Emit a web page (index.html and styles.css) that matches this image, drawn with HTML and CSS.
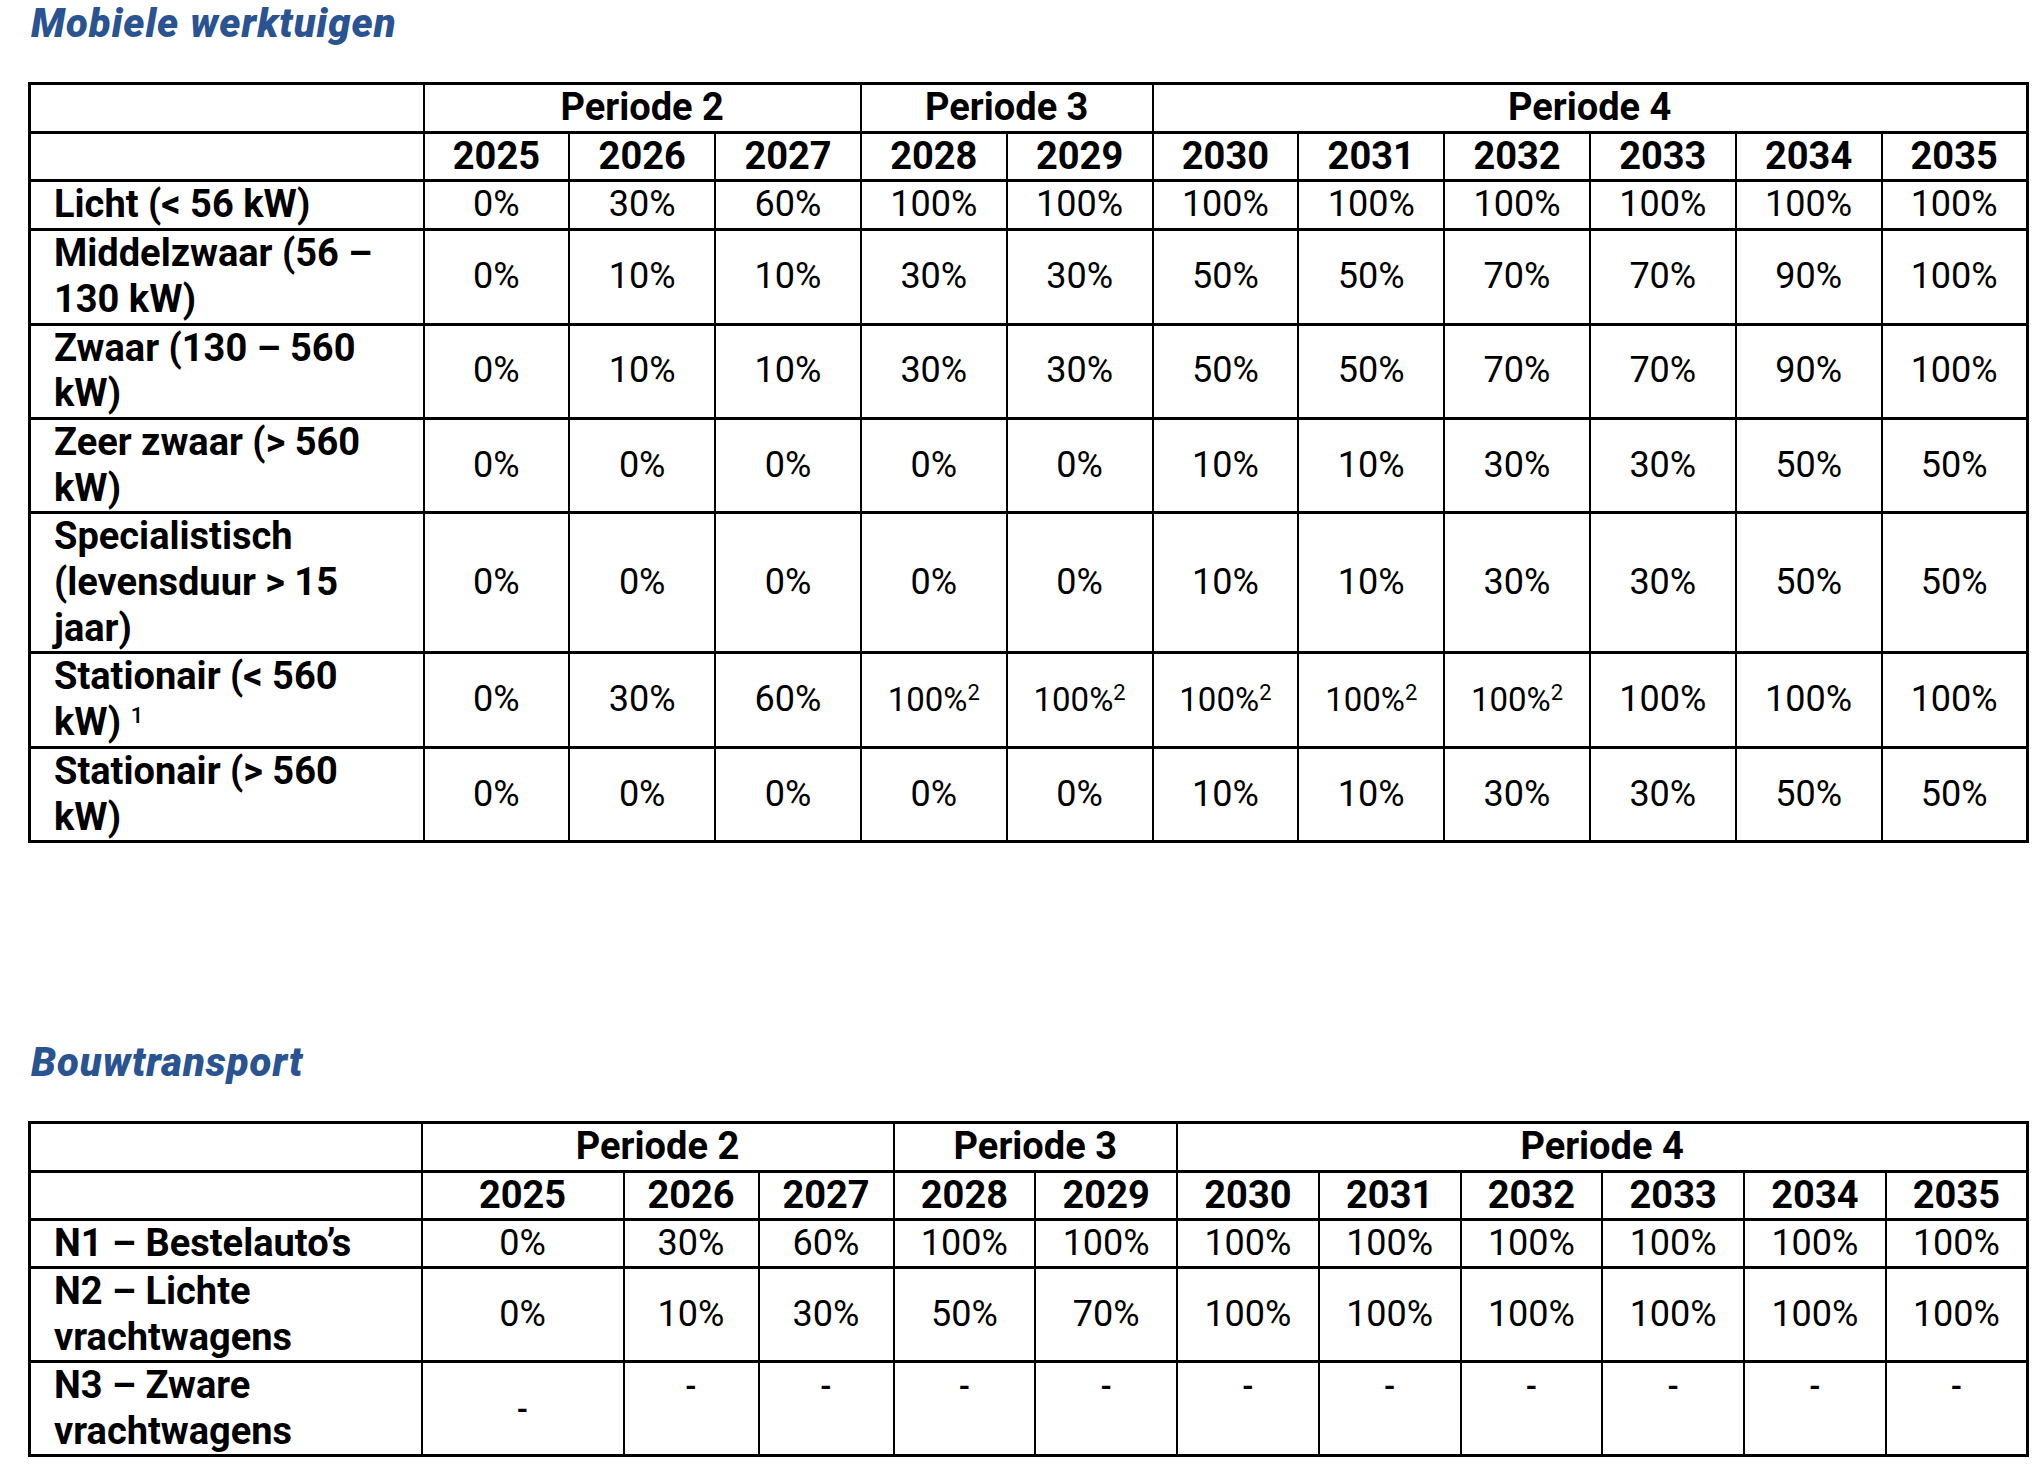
FILE: index.html
```html
<!DOCTYPE html>
<html lang="nl">
<head>
<meta charset="utf-8">
<title>Mobiele werktuigen en bouwtransport</title>
<link rel="stylesheet" href="styles.css">
</head>
<body>
<section class="block">
  <h2 class="title">Mobiele werktuigen</h2>
  <table class="grid grid-a">
    <colgroup>
      <col class="c-label-a">
      <col span="11" class="c-year-a">
    </colgroup>
    <thead>
      <tr>
        <th></th>
        <th colspan="3">Periode 2</th>
        <th colspan="2">Periode 3</th>
        <th colspan="6">Periode 4</th>
      </tr>
      <tr>
        <th></th>
        <th>2025</th><th>2026</th><th>2027</th><th>2028</th><th>2029</th><th>2030</th><th>2031</th><th>2032</th><th>2033</th><th>2034</th><th>2035</th>
      </tr>
    </thead>
    <tbody>
      <tr>
        <th class="label">Licht (&lt; 56 kW)</th>
        <td>0%</td><td>30%</td><td>60%</td><td>100%</td><td>100%</td><td>100%</td><td>100%</td><td>100%</td><td>100%</td><td>100%</td><td>100%</td>
      </tr>
      <tr>
        <th class="label">Middelzwaar (56 –<br>130 kW)</th>
        <td>0%</td><td>10%</td><td>10%</td><td>30%</td><td>30%</td><td>50%</td><td>50%</td><td>70%</td><td>70%</td><td>90%</td><td>100%</td>
      </tr>
      <tr>
        <th class="label">Zwaar (130 – 560<br>kW)</th>
        <td>0%</td><td>10%</td><td>10%</td><td>30%</td><td>30%</td><td>50%</td><td>50%</td><td>70%</td><td>70%</td><td>90%</td><td>100%</td>
      </tr>
      <tr>
        <th class="label">Zeer zwaar (&gt; 560<br>kW)</th>
        <td>0%</td><td>0%</td><td>0%</td><td>0%</td><td>0%</td><td>10%</td><td>10%</td><td>30%</td><td>30%</td><td>50%</td><td>50%</td>
      </tr>
      <tr>
        <th class="label">Specialistisch<br>(levensduur &gt; 15<br>jaar)</th>
        <td>0%</td><td>0%</td><td>0%</td><td>0%</td><td>0%</td><td>10%</td><td>10%</td><td>30%</td><td>30%</td><td>50%</td><td>50%</td>
      </tr>
      <tr>
        <th class="label">Stationair (&lt; 560<br>kW) <sup class="fn">1</sup></th>
        <td>0%</td><td>30%</td><td>60%</td>
        <td class="small">100%<sup>2</sup></td><td class="small">100%<sup>2</sup></td><td class="small">100%<sup>2</sup></td><td class="small">100%<sup>2</sup></td><td class="small">100%<sup>2</sup></td>
        <td>100%</td><td>100%</td><td>100%</td>
      </tr>
      <tr>
        <th class="label">Stationair (&gt; 560<br>kW)</th>
        <td>0%</td><td>0%</td><td>0%</td><td>0%</td><td>0%</td><td>10%</td><td>10%</td><td>30%</td><td>30%</td><td>50%</td><td>50%</td>
      </tr>
    </tbody>
  </table>
</section>

<section class="block block-second">
  <h2 class="title">Bouwtransport</h2>
  <table class="grid grid-b">
    <colgroup>
      <col class="c-label-b">
      <col class="c-b1">
      <col class="c-b2">
      <col class="c-b3">
      <col span="8" class="c-b4">
    </colgroup>
    <thead>
      <tr>
        <th></th>
        <th colspan="3">Periode 2</th>
        <th colspan="2">Periode 3</th>
        <th colspan="6">Periode 4</th>
      </tr>
      <tr>
        <th></th>
        <th>2025</th><th>2026</th><th>2027</th><th>2028</th><th>2029</th><th>2030</th><th>2031</th><th>2032</th><th>2033</th><th>2034</th><th>2035</th>
      </tr>
    </thead>
    <tbody>
      <tr>
        <th class="label">N1 – Bestelauto’s</th>
        <td>0%</td><td>30%</td><td>60%</td><td>100%</td><td>100%</td><td>100%</td><td>100%</td><td>100%</td><td>100%</td><td>100%</td><td>100%</td>
      </tr>
      <tr>
        <th class="label">N2 – Lichte<br>vrachtwagens</th>
        <td>0%</td><td>10%</td><td>30%</td><td>50%</td><td>70%</td><td>100%</td><td>100%</td><td>100%</td><td>100%</td><td>100%</td><td>100%</td>
      </tr>
      <tr>
        <th class="label">N3 – Zware<br>vrachtwagens</th>
        <td class="dash">-</td><td class="dash top">-</td><td class="dash top">-</td><td class="dash top">-</td><td class="dash top">-</td><td class="dash top">-</td><td class="dash top">-</td><td class="dash top">-</td><td class="dash top">-</td><td class="dash top">-</td><td class="dash top">-</td>
      </tr>
    </tbody>
  </table>
</section>
</body>
</html>
```

FILE: styles.css
```css
html, body {
  margin: 0;
  padding: 0;
  background: #ffffff;
}

body {
  font-family: Roboto, "Noto Sans", "Liberation Sans", sans-serif;
  color: #000;
  padding-left: 28px;
}

.block {
  width: 1998px;
}

.block-second {
  margin-top: 196px;
}

.title {
  margin: 0;
  padding-left: 3px;
  font-family: Roboto, "Liberation Sans", sans-serif;
  font-weight: 900;
  font-style: italic;
  font-size: 40px;
  line-height: 48px;
  letter-spacing: 1px;
  color: #2a5391;
}

.grid {
  margin-top: 34px;
  width: 1998px;
  border-collapse: collapse;
  table-layout: fixed;
}

.c-label-a { width: 394px; }
.c-year-a { width: 145.8px; }

.c-label-b { width: 392px; }
.c-b1 { width: 202px; }
.c-b2 { width: 135px; }
.c-b3 { width: 135px; }
.c-b4 { width: 141.75px; }

.grid th,
.grid td {
  border-top: 3px solid #000;
  border-bottom: 3px solid #000;
  border-left: 2px solid #000;
  border-right: 2px solid #000;
  padding: 0;
  line-height: 45.7px;
  text-align: center;
  vertical-align: middle;
}

.grid-b th,
.grid-b td {
  line-height: 45.4px;
}

.grid tr > :first-child {
  border-left-width: 3px;
}

.grid tr > :last-child {
  border-right-width: 3px;
}

.grid thead th {
  font-weight: 700;
  font-size: 38px;
}

.grid th.label {
  text-align: left;
  font-weight: 700;
  font-size: 38px;
  padding-left: 23px;
}

.grid td {
  font-weight: 400;
  font-size: 36px;
}

.grid td.small {
  font-size: 33px;
}

.grid td.small sup {
  font-size: 22px;
  vertical-align: 11px;
  line-height: 0;
}

.fn {
  font-size: 22px;
  font-weight: 500;
  vertical-align: 12px;
  line-height: 0;
}

.grid td.dash {
  font-weight: 700;
  font-size: 30px;
}

.grid td.dash.top {
  vertical-align: top;
}
```
